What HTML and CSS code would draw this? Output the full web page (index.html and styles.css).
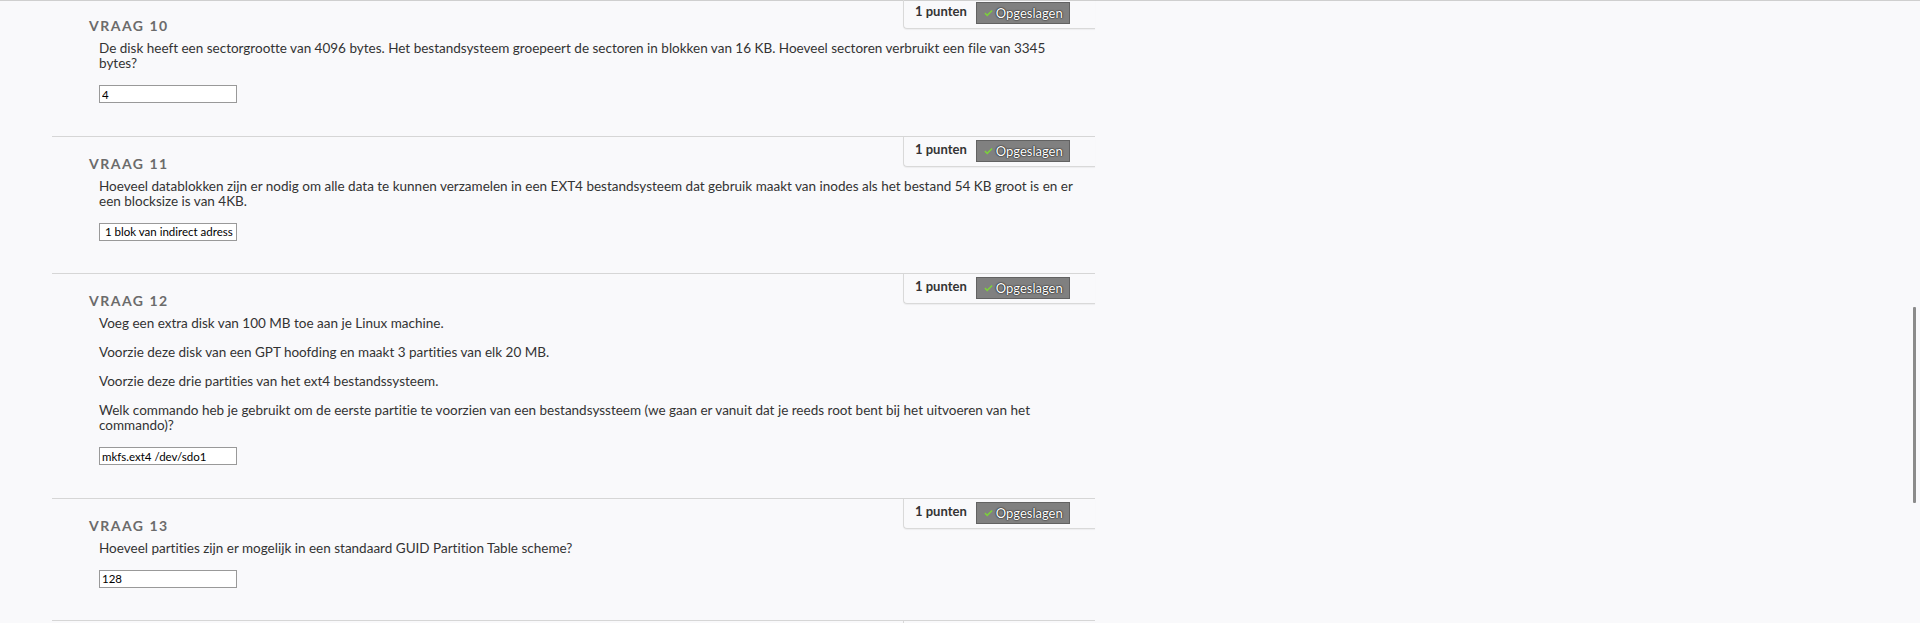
FILE: index.html
```html
<!DOCTYPE html>
<html lang="nl">
<head>
<meta charset="utf-8">
<title>Vragen</title>
<link rel="stylesheet" href="styles.css">
</head>
<body>
<div class="topline"></div>
<div class="questions">
  <section class="question">
    <div class="points"><span class="pts">1 punten</span><span class="saved"><svg class="check" viewBox="0 0 10 8" width="9" height="8"><path d="M1 4.2 L3.6 6.6 L9 1.2" fill="none" stroke="#7ccf3c" stroke-width="1.7"/></svg>Opgeslagen</span></div>
    <h3 class="q-title">Vraag 10</h3>
    <div class="q-body">
      <p>De disk heeft een sectorgrootte van 4096 bytes. Het bestandsysteem groepeert de sectoren in blokken van 16 KB. Hoeveel sectoren verbruikt een file van 3345 bytes?</p>
      <div class="answer"><input type="text" value="4"></div>
    </div>
  </section>
  <section class="question">
    <div class="points"><span class="pts">1 punten</span><span class="saved"><svg class="check" viewBox="0 0 10 8" width="9" height="8"><path d="M1 4.2 L3.6 6.6 L9 1.2" fill="none" stroke="#7ccf3c" stroke-width="1.7"/></svg>Opgeslagen</span></div>
    <h3 class="q-title">Vraag 11</h3>
    <div class="q-body">
      <p>Hoeveel datablokken zijn er nodig om alle data te kunnen verzamelen in een EXT4 bestandsysteem dat gebruik maakt van inodes als het bestand 54 KB groot is en er een blocksize is van 4KB.</p>
      <div class="answer"><input type="text" value=" 1 blok van indirect adress"></div>
    </div>
  </section>
  <section class="question">
    <div class="points"><span class="pts">1 punten</span><span class="saved"><svg class="check" viewBox="0 0 10 8" width="9" height="8"><path d="M1 4.2 L3.6 6.6 L9 1.2" fill="none" stroke="#7ccf3c" stroke-width="1.7"/></svg>Opgeslagen</span></div>
    <h3 class="q-title">Vraag 12</h3>
    <div class="q-body">
      <p>Voeg een extra disk van 100 MB toe aan je Linux machine.</p>
      <p>Voorzie deze disk van een GPT hoofding en maakt 3 partities van elk 20 MB.</p>
      <p>Voorzie deze drie partities van het ext4 bestandssysteem.</p>
      <p>Welk commando heb je gebruikt om de eerste partitie te voorzien van een bestandsyssteem (we gaan er vanuit dat je reeds root bent bij het uitvoeren van het commando)?</p>
      <div class="answer"><input type="text" value="mkfs.ext4 /dev/sdo1"></div>
    </div>
  </section>
  <section class="question">
    <div class="points"><span class="pts">1 punten</span><span class="saved"><svg class="check" viewBox="0 0 10 8" width="9" height="8"><path d="M1 4.2 L3.6 6.6 L9 1.2" fill="none" stroke="#7ccf3c" stroke-width="1.7"/></svg>Opgeslagen</span></div>
    <h3 class="q-title">Vraag 13</h3>
    <div class="q-body">
      <p>Hoeveel partities zijn er mogelijk in een standaard GUID Partition Table scheme?</p>
      <div class="answer"><input type="text" value="128"></div>
    </div>
  </section>
  <section class="question question-next">
    <div class="points"></div>
  </section>
</div>
<div class="scroll-thumb"></div>
</body>
</html>
```

FILE: styles.css
```css
html, body {
  overflow: hidden;
}
body {
  margin: 0;
  background: #f9f9fb;
  font-family: Lato, "Open Sans", "Liberation Sans", sans-serif;
  font-variant-ligatures: none;
  color: #333;
}
.topline {
  height: 1px;
  background: #cfcfcf;
}
.questions {
  width: 1043px;
  margin: -3px 0 0 52px;
}
.question {
  position: relative;
  border-top: 1px solid #d6d6d6;
  padding: 18px 0 32.6px;
}
.question-next {
  height: 40px;
  padding: 0;
}
.q-title {
  margin: 0;
  padding-left: 37px;
  font-size: 14px;
  line-height: 17px;
  font-weight: 700;
  letter-spacing: 1.5px;
  text-transform: uppercase;
  color: #6b6b6b;
}
.q-body {
  margin-top: 7px;
  padding: 0 17px 0 47px;
}
.q-body p {
  margin: 0 0 14px;
  font-size: 13.5px;
  line-height: 15px;
}
.answer {
  margin-top: 3px;
}
.answer input {
  display: block;
  box-sizing: border-box;
  width: 138px;
  height: 18px;
  margin: 0;
  padding: 0 2px;
  border: 1px solid #999;
  border-radius: 0;
  background: #fff;
  font-family: Lato, "Open Sans", sans-serif;
  font-variant-ligatures: none;
  font-size: 11.5px;
  color: #000;
  outline: none;
}
.points {
  position: absolute;
  top: 0;
  right: 0;
  box-sizing: border-box;
  width: 192px;
  height: 30px;
  padding: 3px 0 0 11px;
  display: flex;
  align-items: flex-start;
  gap: 9px;
  border-left: 1px solid #d9d9d9;
  border-bottom: 1px solid #d9d9d9;
  border-bottom-left-radius: 4px;
  box-shadow: 0 1px 1px rgba(0, 0, 0, 0.05);
}
.pts {
  font-size: 13px;
  line-height: 18px;
  font-weight: 700;
  color: #333;
}
.saved {
  box-sizing: border-box;
  display: flex;
  align-items: center;
  gap: 3px;
  width: 94px;
  height: 22px;
  padding: 0 0 0 7px;
  background: #808080;
  border: 1px solid #626262;
  font-size: 13px;
  color: #ffffff;
  text-shadow: 0 0 1px #222, 0 0 1px #222, 0 0 2px #333;
}
.check {
  display: block;
  flex: none;
}
.scroll-thumb {
  position: fixed;
  right: 4px;
  top: 307px;
  width: 3px;
  height: 196px;
  background: #8b8b8b;
  border-radius: 1px;
}
```
